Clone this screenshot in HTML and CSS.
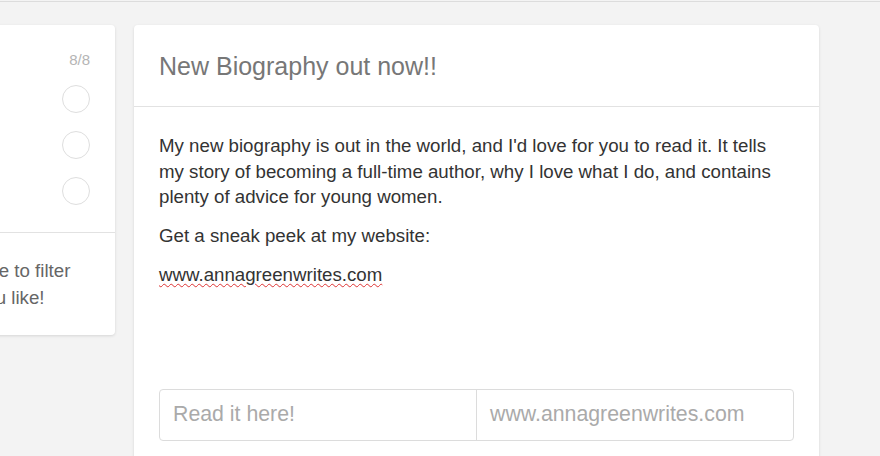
FILE: index.html
```html
<!DOCTYPE html>
<html>
<head>
<meta charset="utf-8">
<link rel="stylesheet" href="styles.css">
</head>
<body>
<div class="topline"></div>
<div class="layout">
  <aside class="side-card">
    <div class="side-top">
      <div class="count">8/8</div>
      <ul class="filters">
        <li><span class="radio"></span></li>
        <li><span class="radio"></span></li>
        <li><span class="radio"></span></li>
      </ul>
    </div>
    <div class="side-bottom">
      <p>Use the circles here to filter<br>the contents as you like!</p>
    </div>
  </aside>
  <main class="post-card">
    <header class="post-header">
      <h1>New Biography out now!!</h1>
    </header>
    <div class="post-body">
      <p>My new biography is out in the world, and I'd love for you to read it. It tells my story of becoming a full-time author, why I love what I do, and contains plenty of advice for young women.</p>
      <p>Get a sneak peek at my website:</p>
      <p><span class="spell">www.annagreenwrites.com</span></p>
      <div class="input-group">
        <div class="field">Read it here!</div>
        <div class="field addon">www.annagreenwrites.com</div>
      </div>
    </div>
  </main>
</div>
</body>
</html>
```
FILE: styles.css
```css
html, body {
  margin: 0;
  padding: 0;
  background: #f3f3f3;
  font-family: "Liberation Sans", Arial, sans-serif;
  overflow: hidden;
  height: 456px;
}
.topline {
  margin-top: 1px;
  height: 1px;
  background: #dcdcdc;
}
.layout {
  display: flex;
  align-items: flex-start;
  gap: 19px;
  padding-top: 23px;
}
.side-card {
  flex: 0 0 300px;
  margin-left: -185px;
  background: #fff;
  border-radius: 4px;
  box-shadow: 0 1px 3px rgba(0,0,0,0.12);
  height: 310px;
  display: flex;
  flex-direction: column;
}
.side-top {
  padding: 27px 25px 0 25px;
  height: 180px;
  border-bottom: 1px solid #e2e2e2;
  display: flex;
  flex-direction: column;
  align-items: flex-end;
}
.count {
  font-size: 15px;
  color: #b5b5b5;
  line-height: 16px;
}
.filters {
  list-style: none;
  margin: 17px 0 0 0;
  padding: 0;
  display: flex;
  flex-direction: column;
  gap: 18px;
}
.radio {
  display: block;
  width: 26px;
  height: 26px;
  border: 1px solid #dedede;
  border-radius: 50%;
}
.side-bottom {
  padding: 24px 25px 0 29px;
}
.side-bottom p {
  margin: 0;
  font-size: 18.7px;
  line-height: 27px;
  color: #666;
  white-space: nowrap;
}
.post-card {
  flex: 0 0 685px;
  background: #fff;
  border-radius: 4px;
  box-shadow: 0 1px 3px rgba(0,0,0,0.12);
  height: 460px;
}
.post-header {
  height: 81px;
  border-bottom: 1px solid #e2e2e2;
  padding: 0 25px;
  display: flex;
  align-items: center;
}
.post-header h1 {
  margin: 0;
  font-size: 25px;
  font-weight: normal;
  color: #777;
  padding-top: 1px;
}
.post-body {
  padding: 26px 25px 0 25px;
}
.post-body p {
  margin: 0 0 13.5px 0;
  font-size: 18.7px;
  line-height: 25.5px;
  color: #333;
}
.spell {
  text-decoration: underline wavy #d33;
  text-decoration-thickness: 1px;
  text-underline-offset: 2px;
}
.input-group {
  margin-top: 101px;
  display: flex;
  border: 1px solid #dcdcdc;
  border-radius: 4px;
  height: 50px;
}
.field {
  flex: 1;
  display: flex;
  align-items: center;
  padding-left: 13px;
  font-size: 21.3px;
  color: #aaa;
}
.addon {
  border-left: 1px solid #dcdcdc;
}
```
